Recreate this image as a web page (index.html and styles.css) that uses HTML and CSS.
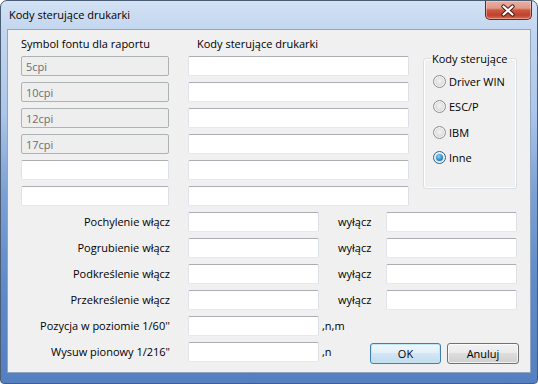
FILE: index.html
```html
<!DOCTYPE html>
<html lang="pl">
<head>
  <meta charset="UTF-8">
  <title>Kody sterujące drukarki</title>
  <link rel="stylesheet" href="styles.css">
</head>
<body>
  <div class="window">
    <div class="titlebar">
      <span class="title">Kody sterujące drukarki</span>
      <button class="close-btn" aria-label="Zamknij">
        <svg width="45" height="17" viewBox="0 0 45 17">
          <path d="M17.5 4.5 L26.5 12.5 M26.5 4.5 L17.5 12.5" stroke="#4a1810" stroke-width="4.2" stroke-linecap="round"/>
          <path d="M17.5 4.5 L26.5 12.5 M26.5 4.5 L17.5 12.5" stroke="#fff" stroke-width="2.2" stroke-linecap="round"/>
        </svg>
      </button>
    </div>

    <div class="client">
      <!-- fonts / codes -->
      <div class="top">
        <div class="col col-fonts">
          <div class="col-head">Symbol fontu dla raportu</div>
          <input class="field" type="text" value="5cpi" disabled>
          <input class="field" type="text" value="10cpi" disabled>
          <input class="field" type="text" value="12cpi" disabled>
          <input class="field" type="text" value="17cpi" disabled>
          <input class="field" type="text">
          <input class="field" type="text">
        </div>
        <div class="col col-codes">
          <div class="col-head">Kody sterujące drukarki</div>
          <input class="field" type="text">
          <input class="field" type="text">
          <input class="field" type="text">
          <input class="field" type="text">
          <input class="field" type="text">
          <input class="field" type="text">
        </div>
        <fieldset class="group">
          <legend>Kody sterujące</legend>
          <div class="radios">
            <label class="radio"><span class="radio-dot"></span>Driver WIN</label>
            <label class="radio"><span class="radio-dot"></span>ESC/P</label>
            <label class="radio"><span class="radio-dot"></span>IBM</label>
            <label class="radio"><span class="radio-dot checked"></span>Inne</label>
          </div>
        </fieldset>
      </div>

      <!-- attributes -->
      <div class="bottom">
        <div class="lbl">Pochylenie włącz</div>
        <input class="field" type="text">
        <div class="mid off">wyłącz</div>
        <input class="field" type="text">

        <div class="lbl">Pogrubienie włącz</div>
        <input class="field" type="text">
        <div class="mid off">wyłącz</div>
        <input class="field" type="text">

        <div class="lbl">Podkreślenie włącz</div>
        <input class="field" type="text">
        <div class="mid off">wyłącz</div>
        <input class="field" type="text">

        <div class="lbl">Przekreślenie włącz</div>
        <input class="field" type="text">
        <div class="mid off">wyłącz</div>
        <input class="field" type="text">

        <div class="lbl">Pozycja w poziomie 1/60''</div>
        <input class="field" type="text">
        <div class="mid unit">,n,m</div>
        <div></div>

        <div class="lbl">Wysuw pionowy 1/216"</div>
        <input class="field" type="text">
        <div class="last">
          <span class="unit">,n</span>
          <div class="buttons">
            <button class="btn btn-default">OK</button>
            <button class="btn">Anuluj</button>
          </div>
        </div>
      </div>
    </div>
  </div>
</body>
</html>
```

FILE: styles.css
```css
* {
  box-sizing: border-box;
}

body {
  margin: 0;
  font-family: "Open Sans", "Noto Sans", sans-serif;
  font-size: 11px;
  color: #000;
  background: #fff;
}

.window {
  width: 538px;
  height: 384px;
  display: flex;
  flex-direction: column;
  padding: 0 6px 10px 6px;
  border: 1px solid #4b5d75;
  border-radius: 7px 7px 4px 4px;
  background: linear-gradient(180deg, #d3e2f4 0, #c2d6ef 30px, #adc7e8 110px, #7da1d4 190px, #5f8bc8 280px, #557fbf 100%);
  overflow: hidden;
}

.titlebar {
  height: 28px;
  display: flex;
  align-items: center;
  margin: 0 -6px;
  padding-left: 8px;
  flex-shrink: 0;
}

.title {
  line-height: 15px;
  margin-top: -1px;
}

.close-btn {
  align-self: flex-start;
  margin-left: auto;
  margin-right: 5px;
  width: 47px;
  height: 19px;
  padding: 0;
  border: 1px solid #6b271c;
  border-top: none;
  border-radius: 0 0 5px 5px;
  background: linear-gradient(180deg, #e9b1a5 0, #e09886 40%, #cc5a44 50%, #c0402a 78%, #d26c58 100%);
  box-shadow: inset 0 0 0 1px rgba(255, 220, 210, 0.45);
  display: flex;
  align-items: center;
  justify-content: center;
}

.client {
  flex: 1;
  border: 1px solid #8fa6c3;
  background: #f0f0f0;
  padding: 6px 13px 0 13px;
  display: flex;
  flex-direction: column;
  gap: 6px;
}

.top {
  display: flex;
  align-items: flex-start;
}

.col {
  display: flex;
  flex-direction: column;
  gap: 6px;
}

.col-fonts {
  width: 148px;
  margin-right: 19px;
}

.col-codes {
  width: 221px;
  margin-right: 14px;
}

.col-head {
  height: 14px;
  line-height: 16px;
  white-space: nowrap;
}

.col-codes .col-head {
  padding-left: 9px;
}

.field {
  display: block;
  width: 100%;
  height: 20px;
  margin: 0;
  padding: 0 4px;
  font: inherit;
  color: #000;
  background: #fff;
  border: 1px solid;
  border-color: #abadb3 #dbdfe6 #e3e9ef #e2e3ea;
  border-radius: 2px;
  outline: none;
}

.field:disabled {
  background: #eeeeee;
  color: #6d6d6d;
  border-color: #adb2b5;
  -webkit-text-fill-color: #6d6d6d;
}

.group {
  width: 94px;
  height: 138px;
  margin: 15px 0 0 0;
  padding: 0 0 0 9px;
  border: 1px solid #d5dfe5;
  border-radius: 3px;
  box-shadow: inset 0 0 0 1px #fff;
}

.group legend {
  padding: 0 1px;
  margin-left: -2px;
  line-height: 15px;
}

.radios {
  margin-top: 7px;
  display: flex;
  flex-direction: column;
  gap: 9.5px;
}

.radio {
  display: flex;
  align-items: center;
  gap: 3px;
  height: 16px;
  white-space: nowrap;
}

.radio-dot {
  width: 13px;
  height: 13px;
  border-radius: 50%;
  border: 1px solid #8e8f8f;
  background: radial-gradient(circle at 50% 45%, #f4f4f4 0, #dcdcdc 55%, #cfcfcf 100%);
  box-shadow: inset 0 0 0 1px #f6f6f6;
  flex-shrink: 0;
  display: flex;
  align-items: center;
  justify-content: center;
}

.radio-dot.checked {
  border-color: #2c628b;
}

.radio-dot.checked::after {
  content: "";
  width: 7px;
  height: 7px;
  border-radius: 50%;
  background: radial-gradient(circle at 40% 35%, #8ad3f8 0, #2f8fcf 55%, #1a4f80 100%);
}

.bottom {
  display: grid;
  grid-template-columns: 167px 131px 67px 131px;
  grid-auto-rows: 20px;
  row-gap: 6px;
  align-items: center;
}

.lbl {
  text-align: right;
  padding-right: 18px;
  white-space: nowrap;
  line-height: 16px;
}

.mid {
  line-height: 16px;
}

.off {
  padding-left: 19px;
}

.unit {
  padding-left: 3px;
  line-height: 16px;
}

.last {
  grid-column: 3 / 5;
  display: flex;
  align-items: center;
  margin-right: -2px;
  height: 20px;
}

.buttons {
  margin-left: auto;
  display: flex;
  gap: 6px;
  margin-top: 2px;
}

.btn {
  width: 72px;
  height: 21px;
  padding: 0;
  font: inherit;
  color: #000;
  border: 1px solid #707070;
  border-radius: 3px;
  background: linear-gradient(180deg, #f2f2f2 0, #ebebeb 45%, #dddddd 50%, #cfcfcf 100%);
  box-shadow: inset 0 0 0 1px rgba(255, 255, 255, 0.7);
}

.btn-default {
  width: 71px;
  border-color: #3c7fb1;
  background: linear-gradient(180deg, #f0f7fc 0, #e3f0f9 45%, #d2e6f4 50%, #c3dcee 100%);
  box-shadow: inset 0 0 0 1px #c4e5f6;
}
```
